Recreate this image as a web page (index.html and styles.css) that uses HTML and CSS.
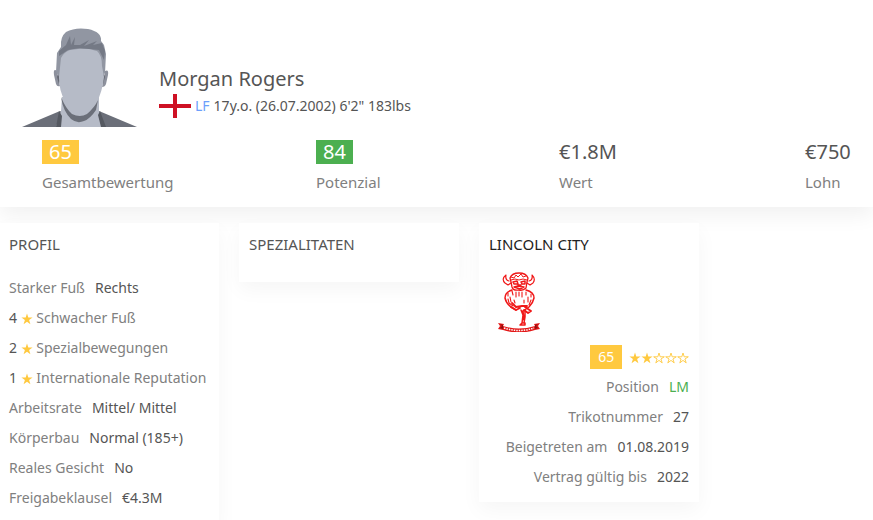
FILE: index.html
```html
<!DOCTYPE html>
<html lang="de">
<head>
    <meta charset="UTF-8">
    <meta name="viewport" content="width=device-width, initial-scale=1.0">
    <title>Morgan Rogers</title>
    <link rel="stylesheet" href="styles.css">
</head>
<body>
    <svg class="defs" width="0" height="0" aria-hidden="true">
        <symbol id="star" viewBox="0 0 12 12">
            <path d="M6 .5 7.3 4.5H11.6L8.1 7 9.4 11.2 6 8.7 2.6 11.2 3.9 7 .4 4.5H4.7Z"/>
        </symbol>
        <symbol id="star-empty" viewBox="0 0 12 12">
            <path d="M6 1 7.2 4.8H11.3L7.9 7 9.2 10.9 6 8.4 2.8 10.9 4.1 7 .7 4.8H4.8Z" fill="none" stroke="currentColor" stroke-width=".9"/>
        </symbol>
    </svg>

    <header class="player">
        <div class="player-top">
            <svg class="avatar" viewBox="0 0 115 100" aria-hidden="true">
                <path d="M0 100 38 84 58 95 77 84 115 100Z" fill="#6b6f79"/>
                <path d="M40 70 77 70V84L83 100H34L39 84Z" fill="#b6bbc7"/>
                <path d="M37 84 34 100H39L40 89ZM78 84 84 100H79L76 88Z" fill="#555961"/>
                <path d="M39 70Q44 82 50 87 58 91 65 87 73 80 76 73L74 83Q68 92 62 94 55 97 49 92 41 84 39 70Z" fill="#6b6f79"/>
                <path d="M35 44Q31 41 32 48L34 57Q35 60 38 59ZM83 44Q87 42 86 48L84 57Q83 60 80 60Z" fill="#8d919d"/>
                <path d="M35 50 37 45 38 54 37 57ZM83 50 81 45V57Z" fill="#666a74"/>
                <path d="M34 45 35 26 39 20Q38 10 44 5 53 0 66 2 80 5 79 14L82 18 84 27 83 46 79 51H38Z" fill="#9196a2"/>
                <path d="M37 24 44 18 48 9 49 18 53 10 52 18 58 18 67 13 62 19 75 14 71 18 80 16 83 24 82 33 77 23 67 22 58 21 46 23 37 29Z" fill="#747985"/>
                <path d="M37 50 39 31Q42 25 48 23L56 22 67 22 75 24Q80 28 80 39L82 50Q80 66 75 74 67 84 59 87 50 84 43 74 37 64 37 50Z" fill="#b6bbc7"/>
            </svg>
            <div class="intro">
                <h1>Morgan Rogers</h1>
                <p class="meta">
                    <svg class="flag" viewBox="0 0 32 24" role="img" aria-label="England">
                        <path fill="#ce1124" d="M14 0H18V10H32V14H18V24H14V14H0V10H14Z"/>
                    </svg>
                    <a class="pos-lf" href="#">LF</a> 17y.o. (26.07.2002) 6'2" 183lbs
                </p>
            </div>
        </div>
        <div class="stats">
            <div class="stat"><div class="value"><span class="rating yellow">65</span></div><div class="name">Gesamtbewertung</div></div>
            <div class="stat"><div class="value"><span class="rating green">84</span></div><div class="name">Potenzial</div></div>
            <div class="stat"><div class="value">€1.8M</div><div class="name">Wert</div></div>
            <div class="stat"><div class="value">€750</div><div class="name">Lohn</div></div>
        </div>
    </header>

    <main class="cards">
        <section class="card">
            <h2>PROFIL</h2>
            <ul>
                <li><span class="label">Starker Fuß</span>Rechts</li>
                <li>4 <svg class="star"><use href="#star"/></svg> <span class="text">Schwacher Fuß</span></li>
                <li>2 <svg class="star"><use href="#star"/></svg> <span class="text">Spezialbewegungen</span></li>
                <li>1 <svg class="star"><use href="#star"/></svg> <span class="text">Internationale Reputation</span></li>
                <li><span class="label">Arbeitsrate</span>Mittel/ Mittel</li>
                <li><span class="label">Körperbau</span>Normal (185+)</li>
                <li><span class="label">Reales Gesicht</span>No</li>
                <li><span class="label">Freigabeklausel</span>€4.3M</li>
            </ul>
        </section>

        <section class="card">
            <h2>SPEZIALITATEN</h2>
        </section>

        <section class="card club">
            <h2><a href="#">LINCOLN CITY</a></h2>
            <svg class="crest" viewBox="0 0 60 60" role="img" aria-label="Lincoln City">
                <g fill="none" stroke="#f01818" stroke-linecap="round" stroke-linejoin="round">
                    <path d="M15 9Q11 8 12 3 7 7 11 11L14 13 17 11M35 9Q39 8 38 3 42 7 39 11L36 13 33 11" stroke-width="1.2"/>
                    <path d="M16 6Q18 1 25 1T34 6L33 10 32 16Q29 19 25 18 19 19 18 15L17 10Z" stroke-width="1.3"/>
                    <path d="M17 5 20 6 22 3 24 5 27 2 29 5 32 4M17 8 21 7 25 8 29 7 33 8" stroke-width="1"/>
                    <path d="M19 10 23 9 24 12 20 12ZM27 10 31 9 31 12 28 12ZM24 13 27 13M20 15 24 14 30 15 26 17Z" stroke-width="1.5"/>
                    <path d="M18 18Q11 20 11 26 12 31 17 35L22 38M32 18Q40 20 40 26 39 31 35 35L29 39" stroke-width="1.5"/>
                    <path d="M18 19 19 23M22 20 22 25M25 20 25 24M28 20 28 25M32 20 32 23M16 25 17 30M34 25 34 30M14 21 14 24M37 22 37 25M14 27 15 31 19 34M37 28 35 33M20 28 21 31M30 28 30 31" stroke-width="1.1"/>
                    <path d="M18 31 22 35 28 34 33 34M17 35 22 38 26 36M31 35 37 39 34 41 30 38" stroke-width="1.9"/>
                    <path d="M27 38 29 43 28 51M31 38 31 45 30 51M29 39 30 48M31 51H28L26 53H31Z" stroke-width="1.5"/>
                </g>
                <path d="M4 51 10 52 9 54Q25 59 41 54L40 52 46 51 44 54 46 57 41 58Q25 63 9 58L4 57 6 54Z" fill="#e31717"/>
                <path d="M6 52 9 53 9 57 6 56 8 54ZM44 52 41 53 41 57 44 56 42 54Z" fill="#8e1010"/>
                <path d="M10 56Q25 61 40 56" fill="none" stroke="#fff" stroke-width="1.5" stroke-dasharray="1.5 1"/>
            </svg>
            <ul>
                <li>
                    <span class="badge">65</span>
                    <span class="stars" role="img" aria-label="2 von 5"><svg class="star"><use href="#star"/></svg><svg class="star"><use href="#star"/></svg><svg class="star"><use href="#star-empty"/></svg><svg class="star"><use href="#star-empty"/></svg><svg class="star"><use href="#star-empty"/></svg></span>
                </li>
                <li><span class="label">Position</span><span class="pos-lm">LM</span></li>
                <li><span class="label">Trikotnummer</span>27</li>
                <li><span class="label">Beigetreten am</span>01.08.2019</li>
                <li><span class="label">Vertrag gültig bis</span>2022</li>
            </ul>
        </section>
    </main>
</body>
</html>
```
FILE: styles.css
```css
* {
    box-sizing: border-box;
}
body {
    margin: 0;
    background-color: #fff;
    color: #555;
    font-family: 'Noto Sans', 'Open Sans', sans-serif;
    font-size: 14px;
    line-height: 20px;
}
h1, h2, p, ul {
    margin: 0;
    padding: 0;
    font-weight: 400;
}
ul {
    list-style: none;
}
a {
    color: inherit;
    text-decoration: none;
}
.defs {
    position: absolute;
}

/* player header */
.player {
    padding: 27px 0 13px;
    box-shadow: 0 8px 20px rgba(0, 0, 0, 0.06);
}
.player-top {
    display: flex;
    align-items: flex-end;
    gap: 22px;
    padding-left: 22px;
}
.avatar {
    display: block;
    width: 115px;
    height: 100px;
}
.intro {
    padding-bottom: 8px;
}
h1 {
    font-size: 20px;
    line-height: 28px;
}
.meta {
    display: flex;
    align-items: center;
    gap: 4px;
    height: 26px;
}
.flag {
    width: 32px;
    height: 24px;
}
.pos-lf {
    color: #6c9ffb;
}
.stats {
    display: grid;
    grid-template-columns: 274fr 243fr 246fr 68fr;
    padding: 11px 0 0 42px;
}
.value {
    height: 28px;
    font-size: 20px;
    line-height: 28px;
}
.rating {
    display: inline-block;
    padding: 0 7px;
    line-height: 24px;
    color: #fff;
}
.yellow {
    background-color: #ffc93f;
}
.green {
    background-color: #4caf50;
}
.name {
    padding-top: 4px;
    font-size: 15px;
    line-height: 24px;
    color: #808080;
}

/* info cards */
.cards {
    display: flex;
    flex-wrap: wrap;
    align-items: flex-start;
    gap: 20px;
    margin-left: -1px;
    padding-top: 16px;
}
.card {
    width: 220px;
    padding: 9px 10px 12px;
    background-color: #fff;
    box-shadow: 0 8px 20px rgba(0, 0, 0, 0.04);
}
h2 {
    font-size: 15px;
    line-height: 24px;
    margin-bottom: 14px;
}
.card ul {
    padding-top: 3px;
}
.card li {
    height: 30px;
    line-height: 30px;
    white-space: nowrap;
}
.label {
    margin-right: 10px;
    color: #808080;
}
.text {
    color: #808080;
}
.star {
    width: 12px;
    height: 12px;
    fill: #ffc93f;
    color: #ffc93f;
    vertical-align: -2px;
}
.club {
    padding-bottom: 10px;
    text-align: right;
}
.club h2 {
    text-align: left;
    color: #222;
}
.crest {
    display: block;
    width: 60px;
    height: 60px;
    margin: 16px 5px 7px;
}
.badge {
    display: inline-block;
    margin-right: 3px;
    padding: 0 8px;
    line-height: 24px;
    color: #fff;
    background-color: #ffc93f;
}
.pos-lm {
    color: #4caf50;
}
```
